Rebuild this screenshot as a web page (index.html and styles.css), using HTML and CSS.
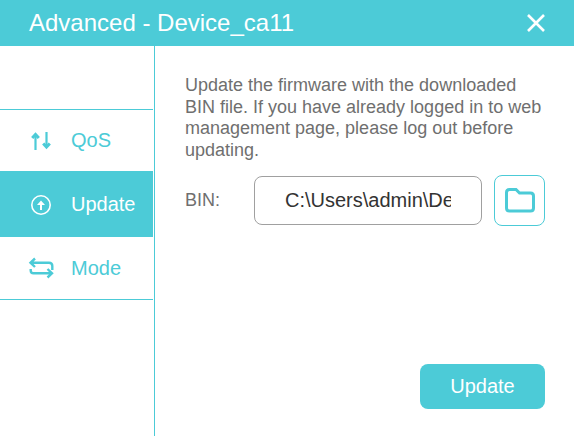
FILE: index.html
```html
<!DOCTYPE html>
<html>
<head>
    <title>Advanced - Device_ca11</title>
    <link rel="stylesheet" href="styles.css">
</head>
<body>
    <div class="dialog">
        <div class="dialog-header">
            <h3 class="dialog-title">Advanced - Device_ca11</h3>
            <svg class="close-icon" width="20" height="20" viewBox="0 0 20 20">
                <path d="M2 2L18 18M18 2L2 18" fill="none" stroke="#fff" stroke-width="2.6"/>
            </svg>
        </div>
        <div class="dialog-body">
            <div class="side-menu">
                <div class="menu-list">
                    <div class="menu-item menu-qos">
                        <svg width="24" height="25" viewBox="0 0 24 25" fill="none" stroke="#4ccbd7" stroke-width="2.200">
                            <path d="M6.500 22V7M17.500 4V19"/>
                            <path d="M3.200 10L6.500 6.500L9.800 10M14.200 15.500L17.500 19L20.800 15.500" stroke-width="3"/>
                        </svg>
                        <span>QoS</span>
                    </div>
                    <div class="menu-item menu-update active">
                        <svg width="24" height="24" viewBox="0 0 24 24" fill="none" stroke="#fff" stroke-width="1.600">
                            <circle cx="12" cy="13" r="9.200"/>
                            <path d="M12 18V11" stroke-width="2"/>
                            <path d="M8 13L12 8.500L16 13Z" fill="#fff" stroke="none"/>
                        </svg>
                        <span>Update</span>
                    </div>
                    <div class="menu-item menu-mode">
                        <svg width="28" height="24" viewBox="0 0 28 24" fill="none" stroke="#4ccbd7" stroke-width="2.400">
                            <path d="M8 2.500L3.500 6.700L8 11M3.500 6.700H22Q25.300 6.700 25.300 10V14M3.700 13V14.500Q3.700 17.300 6.500 17.300H25M20.500 13L25 17.300L20.500 21.500"/>
                        </svg>
                        <span>Mode</span>
                    </div>
                </div>
            </div>
            <div class="content">
                <p class="hint">Update the firmware with the downloaded BIN file. If you have already logged in to web management page, please log out before updating.</p>
                <div class="file-row">
                    <label class="file-label">BIN:</label>
                    <input class="file-input" type="text" value="C:\Users\admin\Desktop\firmware.bin">
                    <button class="browse-btn">
                        <svg width="30" height="25" viewBox="0 0 30 25" fill="none" stroke="#4ccbd7" stroke-width="3">
                            <path d="M1.500 4.500Q1.500 1.500 4.500 1.500H11L14.500 5H25.500Q28.500 5 28.500 8V20Q28.500 23 25.500 23H4.500Q1.500 23 1.500 20Z"/>
                        </svg>
                    </button>
                </div>
                <div class="actions">
                    <button class="update-btn">Update</button>
                </div>
            </div>
        </div>
    </div>
</body>
</html>
```

FILE: styles.css
```css
body {
    font-family: "Liberation Sans", Arial, sans-serif;
    margin: 0;
    background: #fff;
}

.dialog {
    width: 574px;
    height: 436px;
    display: flex;
    flex-direction: column;
    overflow: hidden;
}

.dialog-header {
    height: 46px;
    flex: none;
    background: #4ccbd7;
    display: flex;
    align-items: center;
    justify-content: space-between;
    padding: 0 28px 0 29px;
}

.dialog-title {
    margin: 0;
    color: #fff;
    font-size: 24px;
    font-weight: 400;
}

.dialog-body {
    flex: 1;
    display: flex;
}

/* Left menu */
.side-menu {
    width: 154px;
    flex: none;
    border-right: 1px solid #4ccbd7;
    padding-top: 63px;
}

.menu-list {
    width: 153px;
    border-top: 1px solid #4ccbd7;
    border-bottom: 1px solid #4ccbd7;
}

.menu-item {
    display: flex;
    align-items: center;
    color: #4ccbd7;
    font-size: 20px;
    padding-left: 29px;
    gap: 18px;
}

.menu-item svg {
    flex: none;
}

.menu-qos {
    height: 61px;
}

.menu-update {
    height: 66px;
}

.menu-mode {
    height: 62px;
    padding-left: 27px;
    gap: 16px;
}

.menu-item.active {
    background: #4ccbd7;
    color: #fff;
}

/* Right side */
.content {
    flex: 1;
    padding: 29px 29px 0 30px;
    display: flex;
    flex-direction: column;
}

.hint {
    margin: 0;
    color: #6f6f6f;
    font-size: 18px;
    line-height: 21.500px;
}

.file-row {
    display: flex;
    align-items: center;
    margin-top: 14px;
}

.file-label {
    width: 69px;
    color: #6f6f6f;
    font-size: 18px;
}

.file-input {
    width: 228px;
    height: 49px;
    box-sizing: border-box;
    border: 1px solid #a0a0a0;
    border-radius: 8px;
    padding: 0 30px;
    color: #333;
    font-family: inherit;
    font-size: 20px;
}

.browse-btn {
    width: 51px;
    height: 51px;
    margin-left: 12px;
    padding: 0;
    background: #fff;
    border: 1px solid #4ccbd7;
    border-radius: 8px;
    display: flex;
    align-items: center;
    justify-content: center;
}

.actions {
    display: flex;
    justify-content: flex-end;
    margin-top: 138px;
}

.update-btn {
    width: 125px;
    height: 45px;
    background: #4ccbd7;
    border: none;
    border-radius: 8px;
    color: #fff;
    font-family: inherit;
    font-size: 20px;
}
```
